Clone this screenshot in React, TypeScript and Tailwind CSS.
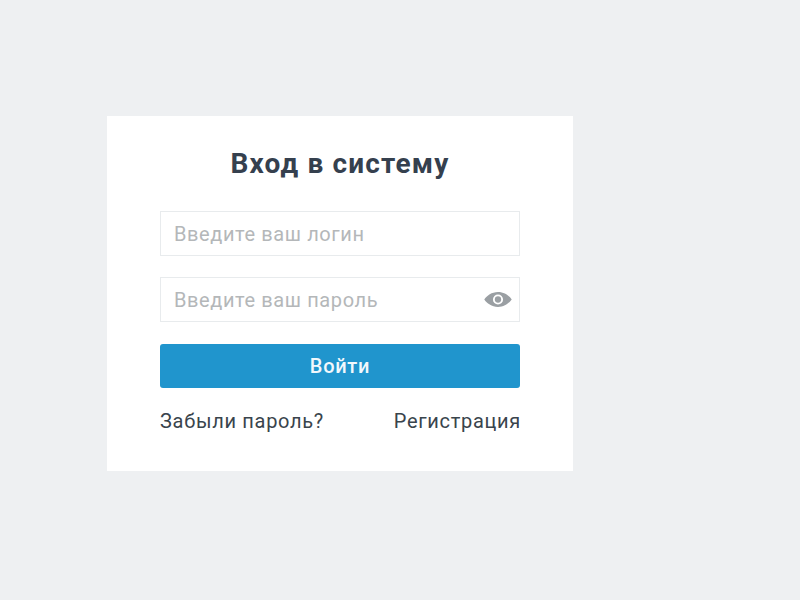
export default function App() {
  return (
    <div className="h-[600px] bg-[#eef0f2] pl-[107px] pt-[116px] font-['Roboto',sans-serif]">
      <div className="flex h-[355px] w-[466px] flex-col bg-white px-[53px] pt-[30px]">
        <h1 className="h-[36px] text-center text-[28px] font-bold leading-[36px] tracking-[1.15px] text-[#35404e]">Вход в систему</h1>
        <div className="mt-[29px] flex h-[45px] items-center border border-[#e8ebed] px-[13px] text-[20px] tracking-[0.6px] text-[#b4b7b9]">
          Введите ваш логин
        </div>
        <div className="mt-[21px] flex h-[45px] items-center justify-between border border-[#e8ebed] pl-[13px] pr-[6px] text-[20px] tracking-[0.6px] text-[#b4b7b9]">
          <span>Введите ваш пароль</span>
          <svg width="30" height="19" viewBox="0 0 28 18" aria-hidden="true">
            <path fill="#9a9fa3" fillRule="evenodd" d="M14 2C8 2 3.500 5.500 1 9c2.500 3.500 7 7 13 7s10.500-3.500 13-7c-2.500-3.500-7-7-13-7Zm0 2.200a4.800 4.800 0 1 1 0 9.600 4.800 4.800 0 0 1 0-9.600Z" />
            <circle cx="14" cy="9" r="3" fill="#9a9fa3" />
          </svg>
        </div>
        <button className="mt-[22px] h-[44px] rounded-[3px] bg-[#2095cd] text-[20px] font-medium tracking-[0.7px] text-[#f2f8fc]">Войти</button>
        <div className="mt-[20px] flex justify-between text-[20px] leading-[26px] tracking-[0.7px] text-[#39444c]">
          <span>Забыли пароль?</span>
          <span className="-mr-[1px]">Регистрация</span>
        </div>
      </div>
    </div>
  );
}
